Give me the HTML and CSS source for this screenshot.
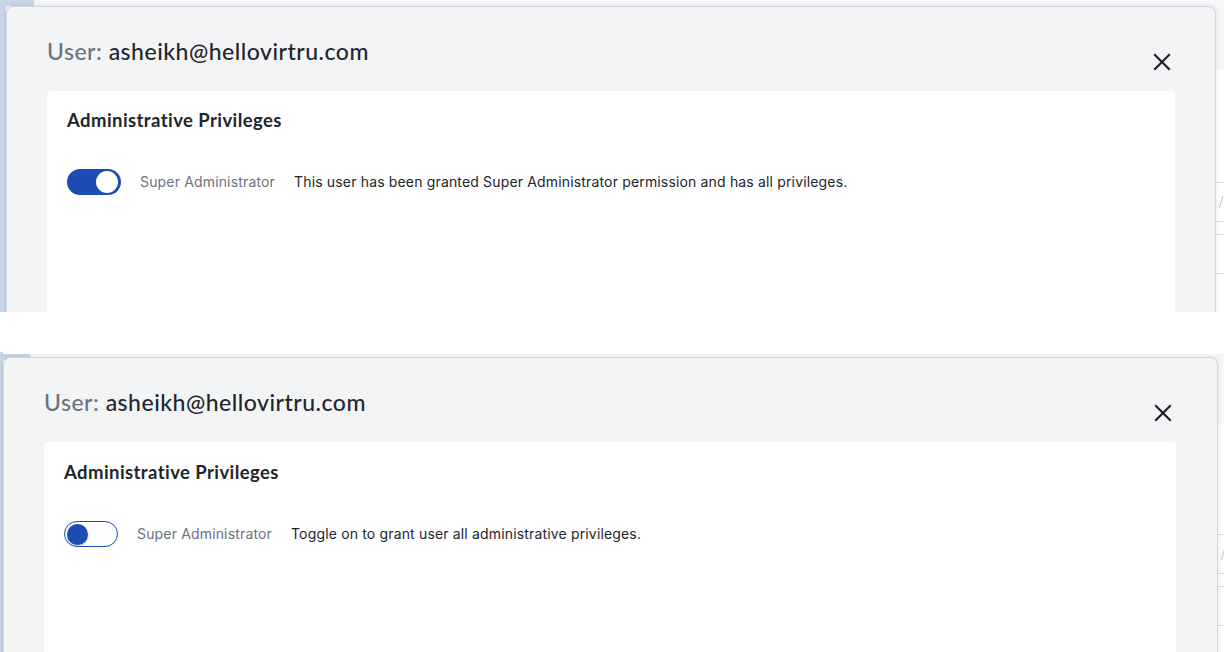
FILE: index.html
```html
<!DOCTYPE html>
<html lang="en">
<head>
<meta charset="utf-8">
<title>User privileges</title>
<link rel="stylesheet" href="styles.css">
</head>
<body>
<div class="shot shot--a">
  <div class="edge"></div>
  <section class="modal">
    <header class="modal-head">
      <h1 class="modal-title"><span class="muted">User:</span> asheikh@hellovirtru.com</h1>
      <button class="close" aria-label="Close">
        <svg width="20" height="20" viewBox="0 0 20 20"><path d="M3 3 L17 17 M17 3 L3 17" stroke="#1f2329" stroke-width="2.2" stroke-linecap="square" fill="none"/></svg>
      </button>
    </header>
    <div class="card">
      <h2 class="card-title">Administrative Privileges</h2>
      <div class="priv-row">
        <span class="toggle toggle--on"><span class="knob"></span></span>
        <span class="priv-label">Super Administrator</span>
        <span class="priv-desc">This user has been granted Super Administrator permission and has all privileges.</span>
      </div>
    </div>
  </section>
  <div class="behind">
    <div class="brow brow--tall"><svg class="ghost" width="8" height="14" viewBox="0 0 8 14"><path d="M0 13 L4 1" stroke="#c9cdd3" stroke-width="1.2" fill="none"/></svg></div>
    <div class="brow brow--short"></div>
    <div class="brow brow--tall"></div>
    <div class="brow"></div>
  </div>
</div>

<div class="gap"></div>

<div class="shot shot--b">
  <div class="edge"></div>
  <section class="modal">
    <header class="modal-head">
      <h1 class="modal-title"><span class="muted">User:</span> asheikh@hellovirtru.com</h1>
      <button class="close" aria-label="Close">
        <svg width="20" height="20" viewBox="0 0 20 20"><path d="M3 3 L17 17 M17 3 L3 17" stroke="#1f2329" stroke-width="2.2" stroke-linecap="square" fill="none"/></svg>
      </button>
    </header>
    <div class="card">
      <h2 class="card-title">Administrative Privileges</h2>
      <div class="priv-row">
        <span class="toggle toggle--off"><span class="knob"></span></span>
        <span class="priv-label">Super Administrator</span>
        <span class="priv-desc">Toggle on to grant user all administrative privileges.</span>
      </div>
    </div>
  </section>
  <div class="behind">
    <div class="brow brow--tall"><svg class="ghost" width="8" height="14" viewBox="0 0 8 14"><path d="M0 13 L4 1" stroke="#c9cdd3" stroke-width="1.2" fill="none"/></svg></div>
    <div class="brow brow--short"></div>
    <div class="brow brow--tall"></div>
    <div class="brow"></div>
  </div>
</div>
</body>
</html>
```

FILE: styles.css
```css
* { box-sizing: border-box; }

html, body {
  margin: 0;
  padding: 0;
  background: #ffffff;
  width: 1224px;
  height: 652px;
  overflow: hidden;
}

.shot {
  display: grid;
  align-items: start;
  overflow: hidden;
  background:
    linear-gradient(#c7d4e6, #c7d4e6) 0 0 / 34px 6px no-repeat,
    linear-gradient(#c7d4e6, #c7d4e6) 0 0 / 6px 100% no-repeat,
    linear-gradient(#f5f6f8, #f5f6f8) 0 0 / 100% 70px no-repeat,
    #ffffff;
}

.shot--a {
  height: 312px;
  grid-template-columns: 6px 1210px 1fr;
  padding-top: 6px;
}

.shot--b {
  height: 300px;
  grid-template-columns: 3px 1215px 1fr;
  padding-top: 5px;
  background:
    linear-gradient(#c7d4e6, #c7d4e6) 0 2px / 30px 6px no-repeat,
    linear-gradient(#c7d4e6, #c7d4e6) 0 0 / 3px 100% no-repeat,
    linear-gradient(#f5f6f8, #f5f6f8) 0 2px / 100% 70px no-repeat,
    #ffffff;
}

.gap {
  height: 40px;
  background: #ffffff;
}

.modal {
  position: relative;
  z-index: 1;
  background: #f3f4f6;
  border: 1px solid #d3d6db;
  border-radius: 8px;
  box-shadow: 0 0 4px rgba(0, 0, 0, 0.12);
  padding: 30px 40px 0 40px;
  min-height: 420px;
}

.shot--b .modal {
  padding: 30px 41px 0 40px;
}

.modal-head {
  display: flex;
  justify-content: space-between;
  align-items: flex-start;
}

.modal-title {
  margin: 0;
  font-family: "Lato", "Open Sans", sans-serif;
  font-weight: 500;
  font-size: 23px;
  line-height: 28px;
  color: #22262c;
  letter-spacing: 0.5px;
}

.muted {
  color: #6b7280;
}

.close {
  border: 0;
  background: transparent;
  padding: 0;
  margin: 15px 3px 0 0;
  width: 20px;
  height: 20px;
  display: flex;
  cursor: pointer;
}

.card {
  margin-top: 19px;
  background: #ffffff;
  border-radius: 4px;
  padding: 18px 21px 0 20px;
  min-height: 340px;
}

.shot--b .card {
  padding: 19px 21px 0 20px;
}

.card-title {
  margin: 0;
  font-family: "Lato", "Open Sans", sans-serif;
  font-weight: 700;
  font-size: 18.5px;
  line-height: 22px;
  letter-spacing: 0.42px;
  color: #22262c;
}

.priv-row {
  margin-top: 38px;
  display: flex;
  align-items: center;
  gap: 19px;
  font-family: "Inter", "Liberation Sans", sans-serif;
  font-size: 14px;
  line-height: 20px;
  letter-spacing: 0.16px;
}

.priv-label {
  color: #6b7280;
}

.priv-desc {
  color: #22262c;
}

.toggle {
  display: flex;
  align-items: center;
  flex: none;
  width: 54px;
  height: 26px;
  border-radius: 13px;
  border: 2px solid #1b4db4;
}

.toggle--on {
  background: #1b4db4;
  justify-content: flex-end;
  padding: 0 1px;
}

.toggle--on .knob {
  width: 22px;
  height: 22px;
  border-radius: 50%;
  background: #ffffff;
}

.toggle--off {
  background: #ffffff;
  border-width: 1.5px;
  justify-content: flex-start;
  padding: 0 2px;
}

.toggle--off .knob {
  width: 21px;
  height: 21px;
  border-radius: 50%;
  background: #1b4db4;
  box-shadow: 0 1px 2px rgba(0, 0, 0, 0.25);
}

.behind {
  padding-top: 176px;
  display: flex;
  flex-direction: column;
}

.shot--b .behind {
  padding-top: 177px;
}

.brow {
  border-top: 1px solid #dcdfe3;
  height: 39px;
  overflow: hidden;
}

.brow--tall { height: 39px; }
.brow--short { height: 13px; }

.ghost {
  display: block;
  margin-left: 3px;
  margin-top: 12px;
}
```
